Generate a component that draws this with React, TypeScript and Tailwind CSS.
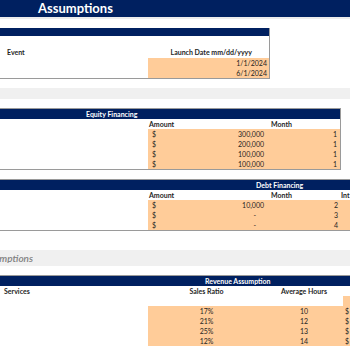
const Cell = ({ className = "", children }: { className?: string; children?: React.ReactNode }) => (
  <div className={`h-[10px] flex items-center whitespace-nowrap ${className}`}>{children}</div>
);

const App = () => {
  const equity = ["300,000", "200,000", "100,000", "100,000"];
  const debt = [
    { amount: "10,000", month: "2" },
    { amount: "-", month: "3" },
    { amount: "-", month: "4" },
  ];
  const revenue = [
    { ratio: "17%", hours: "10" },
    { ratio: "21%", hours: "12" },
    { ratio: "25%", hours: "13" },
    { ratio: "12%", hours: "14" },
  ];

  return (
    <div className="w-[350px] h-[350px] overflow-hidden bg-white font-['Lato',sans-serif] text-[7px] leading-none text-[#1f1f1f]">
      {/* title bar */}
      <div className="h-[17px] bg-[#002060] flex items-center pl-[38px]">
        <span className="text-white font-bold text-[13px]">Assumptions</span>
      </div>
      <div className="h-[11px] border-t-2 border-[#ececec]" />

      {/* launch dates */}
      <div className="w-[270px] border-r border-b border-[#9a9a9a]">
        <div className="h-[8px] bg-[#002060]" />
        <div className="h-[22px] flex items-end pb-[2px] font-bold">
          <div className="w-[148px] pl-[7px]">Event</div>
          <div className="flex-1 text-right pr-[17px]">Launch Date mm/dd/yyyy</div>
        </div>
        {["1/1/2024", "6/1/2024"].map((d) => (
          <div key={d} className="flex">
            <Cell className="w-[148px]" />
            <Cell className="flex-1 justify-end pr-[2px] bg-[#ffcc99]">{d}</Cell>
          </div>
        ))}
      </div>

      <div className="h-[9px]" />
      <div className="h-[11px] bg-[#f0f0f0]" />
      <div className="h-[9px]" />

      {/* equity financing */}
      <div className="w-[341px] border-t border-r border-b border-[#9a9a9a]">
        <div className="h-[10px] bg-[#002060] flex items-center pl-[86px] text-white font-bold">
          Equity Financing
        </div>
        <div className="grid grid-cols-[148px_117px_75px] font-bold">
          <Cell />
          <Cell className="pl-[1px]">Amount</Cell>
          <Cell className="pl-[6px]">Month</Cell>
        </div>
        {equity.map((v, i) => (
          <div key={i} className="grid grid-cols-[148px_117px_75px]">
            <Cell />
            <Cell className="bg-[#ffcc99] justify-between pl-[4px] pr-[1px]">
              <span>$</span>
              <span>{v}</span>
            </Cell>
            <Cell className="bg-[#ffcc99] justify-end pr-[3px]">1</Cell>
          </div>
        ))}
      </div>

      <div className="h-[9px]" />

      {/* debt financing */}
      <div className="border-t border-b border-[#9a9a9a]">
        <div className="h-[10px] bg-[#002060] flex items-center pl-[256px] text-white font-bold">
          Debt Financing
        </div>
        <div className="grid grid-cols-[148px_117px_75px_1fr] font-bold">
          <Cell />
          <Cell className="pl-[1px]">Amount</Cell>
          <Cell className="pl-[6px]">Month</Cell>
          <Cell className="pl-[1px]">Int</Cell>
        </div>
        {debt.map((r, i) => (
          <div key={i} className="grid grid-cols-[148px_117px_75px_1fr]">
            <Cell />
            <Cell className="bg-[#ffcc99] justify-between pl-[4px]">
              <span>$</span>
              <span className={r.amount === "-" ? "pr-[9px]" : "pr-[1px]"}>{r.amount}</span>
            </Cell>
            <Cell className="bg-[#ffcc99] justify-end pr-[2px]">{r.month}</Cell>
            <Cell className="bg-[#ffcc99]" />
          </div>
        ))}
      </div>

      <div className="h-[19px]" />

      {/* section band */}
      <div className="h-[16px] bg-[#f0f0f0] flex items-center">
        <div className="w-[33px] flex justify-end overflow-hidden">
          <span className="whitespace-nowrap italic font-semibold text-[10px] text-[#808080]">
            Revenue Assumptions
          </span>
        </div>
      </div>
      <div className="h-[9px]" />

      {/* revenue assumption */}
      <div className="border-t border-[#9a9a9a]">
        <div className="h-[10px] bg-[#002060] flex items-center pl-[205px] text-white font-bold">
          Revenue Assumption
        </div>
        <div className="grid grid-cols-[148px_117px_78px_1fr] font-bold">
          <Cell className="pl-[4px]">Services</Cell>
          <Cell className="justify-center">Sales Ratio</Cell>
          <Cell className="justify-center">Average Hours</Cell>
          <Cell />
        </div>
        <div className="grid grid-cols-[148px_117px_78px_1fr]">
          <Cell />
          <Cell />
          <Cell />
          <Cell className="bg-[#ffcc99]" />
        </div>
        {revenue.map((r, i) => (
          <div key={i} className="grid grid-cols-[148px_117px_78px_1fr]">
            <Cell className={i === 0 ? "" : ""} />
            <Cell className="bg-[#ffcc99] justify-center">{r.ratio}</Cell>
            <Cell className="bg-[#ffcc99] justify-center">{r.hours}</Cell>
            <Cell className="bg-[#ffcc99] pl-[2px]">$</Cell>
          </div>
        ))}
      </div>
    </div>
  );
};

export default App;
